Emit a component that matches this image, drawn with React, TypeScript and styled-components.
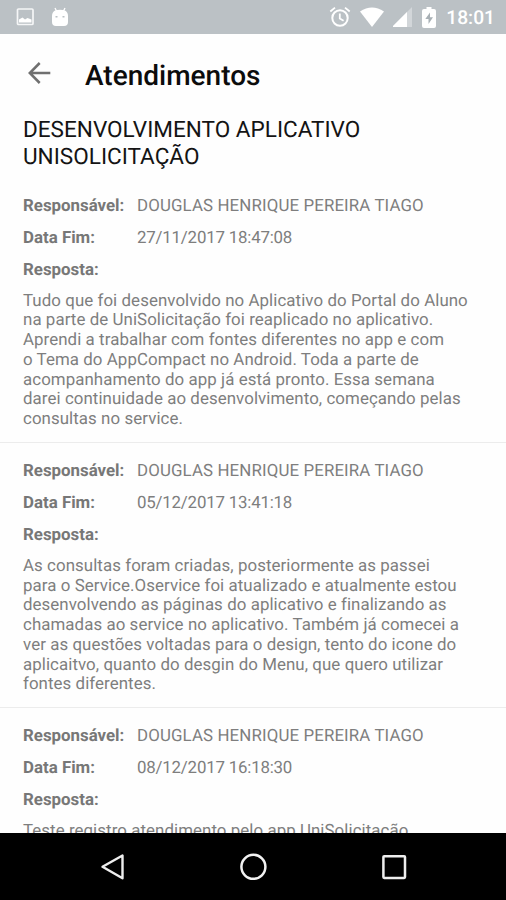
import React from "react";
import styled, { createGlobalStyle } from "styled-components";

const GlobalStyle = createGlobalStyle`
  * { box-sizing: border-box; }
  body {
    margin: 0;
    background: #fff;
    font-family: Roboto, "Liberation Sans", sans-serif;
    text-rendering: geometricPrecision;
  }
`;

const Screen = styled.div`
  display: flex;
  flex-direction: column;
  width: 506px;
  height: 900px;
  overflow: hidden;
  background: #fefefe;
`;

const StatusBar = styled.header`
  display: flex;
  flex: none;
  align-items: center;
  justify-content: space-between;
  height: 34px;
  padding: 0 11px 0 16px;
  background: #bbc1c5;
  color: #fff;
`;

const StatusGroup = styled.div<{ $gap: number }>`
  display: flex;
  align-items: center;
  gap: ${(p) => p.$gap}px;
`;

const Clock = styled.time`
  margin-left: 2px;
  font-size: 19.2px;
  line-height: 34px;
  font-weight: 500;
  padding-top: 2px;
`;

const Toolbar = styled.div`
  display: flex;
  flex: none;
  align-items: center;
  height: 83px;
  padding-left: 22px;
  gap: 28px;
`;

const BackButton = styled.button`
  display: flex;
  padding: 0;
  margin-top: -6px;
  border: 0;
  background: none;
`;

const Title = styled.h1`
  margin: 0;
  font-size: 28px;
  line-height: 34px;
  font-weight: 500;
  color: #0c0c0c;
`;

const Content = styled.main`
  flex: 1;
  min-height: 0;
  overflow: hidden;
`;

const Subject = styled.h2`
  margin: 0 0 7.8px;
  padding-left: 23px;
  font-size: 22.55px;
  line-height: 26.6px;
  font-weight: 400;
  color: #141414;
`;

const Entry = styled.article`
  height: 265.1px;
  padding: 13.2px 0 0 23px;
  border-bottom: 1.5px solid #ececec;
`;

const Field = styled.div`
  display: grid;
  grid-template-columns: 114px 1fr;
  height: 31.7px;
  font-size: 16.87px;
  line-height: 31.7px;
  color: #7e7e7e;
`;

const Label = styled.span`
  font-weight: 700;
  color: #777;
`;

const Owner = styled.span`
  letter-spacing: 0.12px;
`;

const DateText = styled.time`
  letter-spacing: -0.2px;
`;

const Answer = styled.p`
  margin: 5.5px 0 0;
  font-size: 16.87px;
  line-height: 19.75px;
  letter-spacing: 0.07px;
  color: #7e7e7e;
  white-space: pre;
`;

const NavBar = styled.nav`
  display: flex;
  flex: none;
  align-items: center;
  justify-content: center;
  gap: 112px;
  height: 67px;
  background: #000;
`;

const PictureIcon = () => (
  <svg width="19" height="18" viewBox="0 0 19 18">
    <rect x="1.5" y="1" width="15.5" height="15.5" rx="1" fill="none" stroke="currentColor" strokeWidth="1.7" opacity=".85" />
    <path d="M3 14.5v-3l3.5-2 2.5 2 2.5-1.5 4 1.5v3z" fill="currentColor" />
  </svg>
);

const RobotIcon = () => (
  <svg width="18" height="20" viewBox="0 0 18 20">
    <path d="M4 1l2 4M14 1l-2 4" stroke="currentColor" strokeWidth="1.3" />
    <path fillRule="evenodd" d="M4 3.5Q9 2 14 3.5Q17 5 17 9v6q0 4-4 4H5q-4 0-4-4V9q0-4 3-5.5zM4.5 9v1.5h2V9zm7 0v1.5h2V9z" fill="currentColor" />
  </svg>
);

const AlarmIcon = () => (
  <svg width="22" height="22" viewBox="0 0 22 22" fill="none" stroke="currentColor" strokeWidth="2">
    <circle cx="11" cy="12" r="7.7" />
    <path d="M1.3 5.5L6 1.6M20.7 5.5L16 1.6M10.8 7.5v5l3.8 2.3" strokeWidth="1.8" />
  </svg>
);

const WifiIcon = () => (
  <svg width="26" height="20" viewBox="0 0 26 20">
    <path d="M1 4.5Q13-3.5 25 4.5L13 20z" fill="currentColor" />
  </svg>
);

const SignalIcon = () => (
  <svg width="21" height="20" viewBox="0 0 21 20">
    <path d="M-1 20L19 0v20z" fill="currentColor" opacity=".35" />
    <path d="M-1 20L14 5v15z" fill="currentColor" />
  </svg>
);

const BatteryIcon = () => (
  <svg width="14" height="21" viewBox="0 0 14 21">
    <path d="M4.5 0h5v2H12q2 0 2 2v15q0 2-2 2H2q-2 0-2-2V4q0-2 2-2h2.5z" fill="currentColor" />
    <path d="M8 5.5L3.3 12H6.5v5L11 10.3H8z" fill="#a8b0b5" />
  </svg>
);

const BackIcon = () => (
  <svg width="35" height="30" viewBox="0 0 35 30" fill="none" stroke="#707070" strokeWidth="2.5">
    <path d="M28.3 15H8M17.7 5L7.8 15l9.9 10" />
  </svg>
);

const NavBackIcon = () => (
  <svg width="28" height="30" viewBox="0 0 28 30">
    <path d="M24.5 3.5v22.8L4.5 14.8z" fill="none" stroke="#eee" strokeWidth="2.4" strokeLinejoin="round" />
  </svg>
);

const NavHomeIcon = () => (
  <svg width="30" height="30" viewBox="0 0 30 30">
    <circle cx="15.4" cy="14.8" r="12" fill="none" stroke="#f2f2f2" strokeWidth="2.5" />
  </svg>
);

const NavRecentIcon = () => (
  <svg width="28" height="28" viewBox="0 0 28 28">
    <rect x="3.4" y="3.3" width="21.6" height="21.6" rx=".8" fill="none" stroke="#eee" strokeWidth="2.5" />
  </svg>
);

const entries = [
  {
    owner: "DOUGLAS HENRIQUE PEREIRA TIAGO",
    date: "27/11/2017 18:47:08",
    answer: `Tudo que foi desenvolvido no Aplicativo do Portal do Aluno
na parte de UniSolicitação foi reaplicado no aplicativo.
Aprendi a trabalhar com fontes diferentes no app e com
o Tema do AppCompact no Android. Toda a parte de
acompanhamento do app já está pronto. Essa semana
darei continuidade ao desenvolvimento, começando pelas
consultas no service.`,
  },
  {
    owner: "DOUGLAS HENRIQUE PEREIRA TIAGO",
    date: "05/12/2017 13:41:18",
    answer: `As consultas foram criadas, posteriormente as passei
para o Service.Oservice foi atualizado e atualmente estou
desenvolvendo as páginas do aplicativo e finalizando as
chamadas ao service no aplicativo. Também já comecei a
ver as questões voltadas para o design, tento do icone do
aplicaitvo, quanto do desgin do Menu, que quero utilizar
fontes diferentes.`,
  },
  {
    owner: "DOUGLAS HENRIQUE PEREIRA TIAGO",
    date: "08/12/2017 16:18:30",
    answer: "Teste registro atendimento pelo app UniSolicitação",
  },
];

export default function App() {
  return (
    <Screen>
      <GlobalStyle />
      <StatusBar>
        <StatusGroup $gap={16}>
          <PictureIcon />
          <RobotIcon />
        </StatusGroup>
        <StatusGroup $gap={8}>
          <AlarmIcon />
          <WifiIcon />
          <SignalIcon />
          <BatteryIcon />
          <Clock>18:01</Clock>
        </StatusGroup>
      </StatusBar>
      <Toolbar>
        <BackButton aria-label="Voltar">
          <BackIcon />
        </BackButton>
        <Title>Atendimentos</Title>
      </Toolbar>
      <Content>
        <Subject>
          DESENVOLVIMENTO APLICATIVO
          <br />
          UNISOLICITAÇÃO
        </Subject>
        {entries.map((entry) => (
          <Entry key={entry.date}>
            <Field>
              <Label>Responsável:</Label>
              <Owner>{entry.owner}</Owner>
            </Field>
            <Field>
              <Label>Data Fim:</Label>
              <DateText>{entry.date}</DateText>
            </Field>
            <Field>
              <Label>Resposta:</Label>
            </Field>
            <Answer>{entry.answer}</Answer>
          </Entry>
        ))}
      </Content>
      <NavBar>
        <NavBackIcon />
        <NavHomeIcon />
        <NavRecentIcon />
      </NavBar>
    </Screen>
  );
}
